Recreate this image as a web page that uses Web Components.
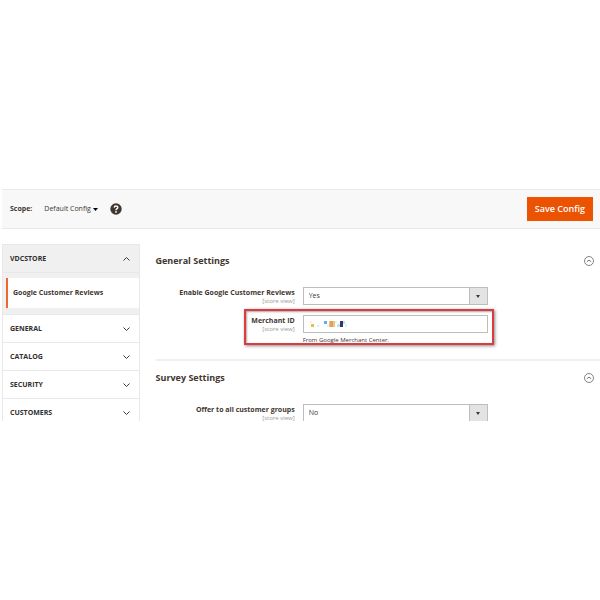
<!DOCTYPE html>
<html lang="en">
<head>
<meta charset="utf-8">
<title>Configuration</title>
<style>
    body {
        margin: 0;
        min-height: 100vh;
        display: flex;
        align-items: center;
        background: #fff;
        color: #41362f;
        font-family: "Open Sans", "Noto Sans", sans-serif;
        font-size: 7px;
        line-height: 10px;
    }
</style>
</head>
<body>
<config-page>
    <scope-bar slot="toolbar" scope="Default Config"></scope-bar>
    <nav-group slot="nav" name="VDCSTORE" open>
        <nav-link>Google Customer Reviews</nav-link>
    </nav-group>
    <nav-group slot="nav" name="GENERAL"></nav-group>
    <nav-group slot="nav" name="CATALOG"></nav-group>
    <nav-group slot="nav" name="SECURITY"></nav-group>
    <nav-group slot="nav" name="CUSTOMERS"></nav-group>
    <config-section name="General Settings">
        <config-field type="select" label="Enable Google Customer Reviews" value="Yes"></config-field>
        <config-field type="text" label="Merchant ID" note="From Google Merchant Center." marked></config-field>
    </config-section>
    <config-section name="Survey Settings">
        <config-field type="select" label="Offer to all customer groups" value="No"></config-field>
    </config-section>
</config-page>

<script>
class ConfigPage extends HTMLElement {
    constructor() {
        super();
        this.myRoot = this.attachShadow({ mode: "open" });
        this.#Render();
    }

    #Render() {
        this.myRoot.innerHTML = `
            <slot name="toolbar"></slot>
            <div class="columns">
                <nav><slot name="nav"></slot></nav>
                <main><slot></slot></main>
            </div>

            <style>
            :host {
                display: block;
                box-sizing: border-box;
                width: 100%;
                aspect-ratio: 300 / 121;
                min-height: 0;
                padding: 10px 0 0 2px;
                overflow: hidden;
            }
            .columns {
                display: grid;
                grid-template-columns: 23% 1fr;
                column-gap: 16px;
                align-items: start;
                padding-top: 15px;
            }
            nav {
                border: 1px solid #e8e8e8;
                border-bottom: none;
            }
            </style>
        `
    }
}

class ScopeBar extends HTMLElement {
    constructor() {
        super();
        this.myRoot = this.attachShadow({ mode: "open" });
        this.scope = this.getAttribute("scope");
        this.#Render();
    }

    #Render() {
        this.myRoot.innerHTML = `
            <header>
                <strong id="scope">Scope:</strong>
                <button class="switcher" aria-labelledby="scope">
                    ${this.scope}
                    <svg width="5" height="3" viewBox="0 0 5 3"><path d="M0 0h5L2.5 3z" fill="#000"/></svg>
                </button>
                <button class="help" aria-label="Help">
                    <svg width="12" height="12" viewBox="0 0 12 12">
                        <circle cx="6" cy="6" r="5.700" fill="#41362f"/>
                        <path d="M4.200 4.600C4.300 2.400 7.900 2.500 7.800 4.500C7.800 5.700 6 5.700 6 7.200" fill="none" stroke="#fff" stroke-width="1.400"/>
                        <circle cx="6" cy="8.900" r=".9" fill="#fff"/>
                    </svg>
                </button>
                <button class="save">Save Config</button>
            </header>

            <style>
            :host {
                display: block;
            }
            header {
                display: flex;
                align-items: center;
                box-sizing: border-box;
                height: 40px;
                padding: 0 7px 0 8px;
                background: #f8f8f8;
                border-top: 1px solid #ebebeb;
                border-bottom: 1px solid #e8e8e8;
            }
            button {
                padding: 0;
                border: none;
                background: none;
                color: inherit;
                font: inherit;
                cursor: pointer;
            }
            .switcher {
                display: flex;
                align-items: center;
                gap: 2px;
                margin: 0 12px;
            }
            .help svg {
                display: block;
            }
            .save {
                margin-left: auto;
                height: 24px;
                padding: 0 8px;
                background: #eb5202;
                color: #fff;
                font-size: 9px;
                font-weight: 600;
            }
            </style>
        `
    }
}

class NavGroup extends HTMLElement {
    constructor() {
        super();
        this.myRoot = this.attachShadow({ mode: "open" });
        this.name = this.getAttribute("name");
        this.#Render();
    }

    #Render() {
        const open = this.hasAttribute("open");
        this.myRoot.innerHTML = `
            <button aria-expanded="${open}">
                ${this.name}
                <svg width="7" height="4" viewBox="0 0 7 4">
                    <path d="${open ? "M.5 3.500l3-3 3 3" : "M.5.5l3 3 3-3"}" fill="none" stroke="#41362f"/>
                </svg>
            </button>
            ${open ? `<div class="items"><slot></slot></div>` : ""}

            <style>
            :host {
                display: block;
            }
            :host([open]) {
                background: #f0f0f0;
            }
            button {
                display: flex;
                align-items: center;
                justify-content: space-between;
                width: 100%;
                height: 28px;
                padding: 0 9px 0 7px;
                border: none;
                border-bottom: 1px solid #e8e8e8;
                background: none;
                color: #303030;
                font: inherit;
                font-weight: 700;
                cursor: pointer;
            }
            .items {
                padding: 5px 0 6px 3px;
                border-bottom: 1px solid #e8e8e8;
            }
            </style>
        `
    }
}

class NavLink extends HTMLElement {
    constructor() {
        super();
        this.myRoot = this.attachShadow({ mode: "open" });
        this.#Render();
    }

    #Render() {
        this.myRoot.innerHTML = `
            <a href="#"><slot></slot></a>

            <style>
            :host {
                display: block;
            }
            a {
                display: block;
                padding: 10px 0 10px 5px;
                border-left: 2px solid #ef672f;
                background: #fff;
                color: inherit;
                font-weight: 700;
                text-decoration: none;
            }
            </style>
        `
    }
}

class ConfigSection extends HTMLElement {
    constructor() {
        super();
        this.myRoot = this.attachShadow({ mode: "open" });
        this.name = this.getAttribute("name");
        this.#Render();
    }

    #Render() {
        this.myRoot.innerHTML = `
            <header>
                <h2>${this.name}</h2>
                <button aria-label="Collapse ${this.name}">
                    <svg width="10" height="10" viewBox="0 0 10 10" fill="none" stroke="#666">
                        <circle cx="5" cy="5" r="4.500" stroke-width=".8"/>
                        <path d="M2.800 5.700L5 4.200l2.200 1.500" stroke-width=".9"/>
                    </svg>
                </button>
            </header>
            <div class="fields"><slot></slot></div>

            <style>
            :host {
                display: block;
                padding-bottom: 14px;
                border-bottom: 2px solid #efefef;
            }
            header {
                display: flex;
                align-items: center;
                justify-content: space-between;
                height: 34px;
                padding-right: 6px;
            }
            h2 {
                margin: 0;
                font-size: 9px;
                font-weight: 700;
            }
            button {
                padding: 0;
                border: none;
                background: none;
                cursor: pointer;
            }
            svg {
                display: block;
            }
            .fields {
                display: grid;
                row-gap: 10px;
                padding-top: 9px;
            }
            </style>
        `
    }
}

class ConfigField extends HTMLElement {
    constructor() {
        super();
        this.myRoot = this.attachShadow({ mode: "open" });
        this.label = this.getAttribute("label");
        this.note = this.getAttribute("note");
        this.value = this.getAttribute("value") ?? "";
        this.#Render();
    }

    #Control() {
        if (this.getAttribute("type") === "select") {
            return `
                <select id="control"><option>${this.value}</option></select>
                <span class="arrow"><svg width="4" height="3" viewBox="0 0 4 3"><path d="M0 0h4L2 3z" fill="#41362f"/></svg></span>
            `
        }
        // the id is masked with coloured blocks
        return `
            <input id="control" type="text" value="${this.value}">
            <svg class="mask" width="38" height="7" viewBox="0 0 38 7">
                <path d="M0 0h2v2H0z" fill="#fff3b0"/>
                <path d="M1 3h3v3H1z" fill="#edb85c"/>
                <path d="M7 4h2v2H7z" fill="#c5f5f5"/>
                <path d="M14 0h3v3h-3z" fill="#62aeea"/>
                <path d="M17 3h2v3h-2z" fill="#d7f8f8"/>
                <path d="M19 0h6v6h-6z" fill="#f3c283"/>
                <path d="M20 0h3v6h-3z" fill="#e5a052"/>
                <path d="M25 0h2v2h-2z" fill="#d7f8f8"/>
                <path d="M27 3h3v3h-3z" fill="#a7edf4"/>
                <path d="M30 0h3v6h-3z" fill="#4b2a68"/>
                <path d="M33 0h2v3h-2z" fill="#a7edf4"/>
                <path d="M35 3h2v3h-2z" fill="#d7f8f8"/>
            </svg>
        `
    }

    #Render() {
        this.myRoot.innerHTML = `
            <label for="control">${this.label}<small>[store view]</small></label>
            <div class="value">
                <div class="control">${this.#Control()}</div>
                ${this.note ? `<p>${this.note}</p>` : ""}
            </div>

            <style>
            :host {
                display: grid;
                grid-template-columns: 139fr 185fr 104fr;
                column-gap: 8px;
                position: relative;
            }
            :host([marked])::after {
                content: "";
                position: absolute;
                inset: -6px 106px 0 88px;
                border: 2px solid #dc3c40;
                box-shadow: 1px 1px 3px #888, inset 1px 1px 2px #aaa;
                pointer-events: none;
            }
            label {
                padding-top: 1px;
                text-align: right;
                font-weight: 700;
                white-space: nowrap;
            }
            small {
                display: block;
                color: #999;
                font-size: 6px;
                font-weight: 400;
                line-height: 6px;
            }
            .control {
                position: relative;
            }
            select, input {
                display: block;
                box-sizing: border-box;
                width: 100%;
                height: 18px;
                margin: 0;
                padding: 0 5px;
                appearance: none;
                border: 1px solid #bdbdbd;
                border-radius: 0;
                background: #fff;
                color: #41362f;
                font: inherit;
            }
            .arrow {
                position: absolute;
                inset: 1px 1px 1px auto;
                width: 17px;
                display: grid;
                place-items: center;
                border-left: 1px solid #bdbdbd;
                background: #e3e3e3;
                pointer-events: none;
            }
            .mask {
                position: absolute;
                left: 7px;
                top: 6px;
            }
            p {
                margin: 0;
                padding-top: 2px;
                font-size: 6px;
                line-height: 10px;
            }
            </style>
        `
    }
}

window.customElements.define("config-page", ConfigPage);
window.customElements.define("scope-bar", ScopeBar);
window.customElements.define("nav-group", NavGroup);
window.customElements.define("nav-link", NavLink);
window.customElements.define("config-section", ConfigSection);
window.customElements.define("config-field", ConfigField);
</script>
</body>
</html>
